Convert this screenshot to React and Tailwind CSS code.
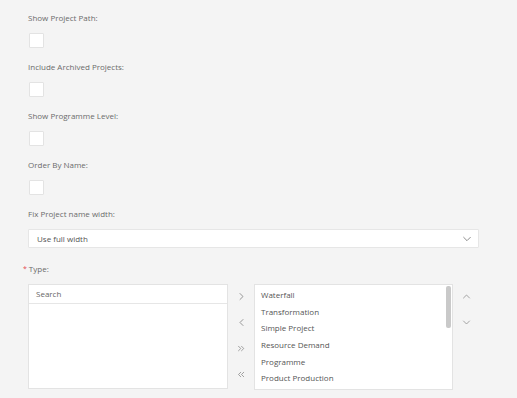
import React from "react";

const font = { fontFamily: '"Open Sans", "Noto Sans", sans-serif' };

function Label({ children, required }) {
  return (
    <div className="h-[12px] text-[8px] leading-[12px] text-[#6b6b6b] flex items-center">
      {required && <span className="text-[#e5484d] mr-[2px] -ml-[5px] text-[7px]">*</span>}
      {children}
    </div>
  );
}

function Check() {
  return <div className="w-[15px] h-[15px] bg-white border border-[#e3e3e3] rounded-[1px] mt-[9px] mb-[13px] ml-[1px]" />;
}

function Chevron({ dir = "down", className = "" }) {
  const paths = {
    down: "M2 4 L6 8 L10 4",
    up: "M2 8 L6 4 L10 8",
    right: "M4 2 L8 6 L4 10",
    left: "M8 2 L4 6 L8 10",
  };
  return (
    <svg viewBox="0 0 12 12" className={className} fill="none" stroke="currentColor" strokeWidth="1" strokeLinecap="round" strokeLinejoin="round">
      <path d={paths[dir]} />
    </svg>
  );
}

function Double({ dir = "right" }) {
  const d = dir === "right" ? "M2 3 L5 6 L2 9 M6 3 L9 6 L6 9" : "M5 3 L2 6 L5 9 M9 3 L6 6 L9 9";
  return (
    <svg viewBox="0 0 12 12" className="w-[9px] h-[9px]" fill="none" stroke="currentColor" strokeWidth="0.9" strokeLinecap="round" strokeLinejoin="round">
      <path d={d} />
    </svg>
  );
}

export default function App() {
  const items = ["Waterfall", "Transformation", "Simple Project", "Resource Demand", "Programme", "Product Production"];
  return (
    <div className="w-[517px] h-[398px] bg-[#f4f4f4] overflow-hidden" style={font}>
      <div className="pl-[28px] pt-[12px]">
        <Label>Show Project Path:</Label>
        <Check />
        <Label>Include Archived Projects:</Label>
        <Check />
        <Label>Show Programme Level:</Label>
        <Check />
        <Label>Order By Name:</Label>
        <Check />
        <Label>Fix Project name width:</Label>
        <div className="mt-[9px] w-[451px] h-[19px] bg-white border border-[#e6e6e6] rounded-[1px] flex items-center justify-between pl-[8px] pr-[6px]">
          <span className="text-[8px] text-[#555]">Use full width</span>
          <Chevron dir="down" className="w-[10px] h-[10px] text-[#777]" />
        </div>
        <div className="mt-[15px]">
          <Label required>Type:</Label>
        </div>
        <div className="mt-[9px] flex">
          <div className="w-[200px] h-[105px] bg-white border border-[#e3e3e3]">
            <div className="h-[19px] border-b border-[#e6e6e6] flex items-center pl-[7px] text-[8px] text-[#666]">Search</div>
          </div>
          <div className="w-[26px] flex flex-col items-center pt-[8px] text-[#777]">
            <div className="h-[26px] flex items-start"><Chevron dir="right" className="w-[9px] h-[9px]" /></div>
            <div className="h-[26px] flex items-start"><Chevron dir="left" className="w-[9px] h-[9px]" /></div>
            <div className="h-[26px] flex items-start"><Double dir="right" /></div>
            <div className="h-[26px] flex items-start"><Double dir="left" /></div>
          </div>
          <div className="w-[199px] h-[106px] bg-white border border-[#e3e3e3] relative overflow-hidden">
            <div className="pt-[2px] pl-[6px]">
              {items.map((it) => (
                <div key={it} className="h-[16.7px] leading-[16.7px] text-[8px] text-[#555]">{it}</div>
              ))}
            </div>
            <div className="absolute right-[1px] top-[1px] w-[5px] h-[42px] bg-[#c9c9c9] rounded-[2px]" />
          </div>
          <div className="w-[26px] flex flex-col items-center pt-[8px] text-[#888]">
            <div className="h-[26px]"><Chevron dir="up" className="w-[9px] h-[9px]" /></div>
            <div className="h-[26px]"><Chevron dir="down" className="w-[9px] h-[9px]" /></div>
          </div>
        </div>
      </div>
    </div>
  );
}
